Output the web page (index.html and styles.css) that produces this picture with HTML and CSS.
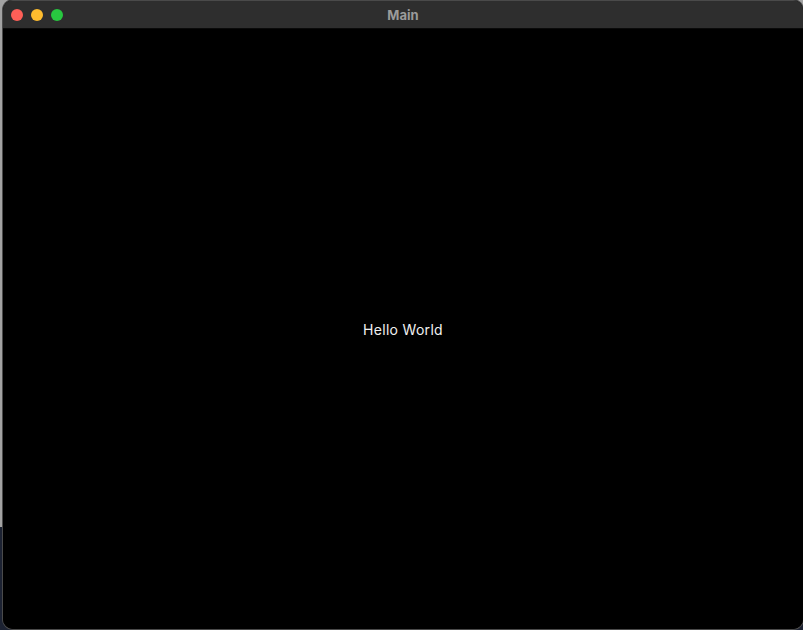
FILE: index.html
```html
<!DOCTYPE html>
<html>
<head>
<meta charset="utf-8">
<link rel="stylesheet" href="styles.css">
</head>
<body>
<div class="desktop">
  <div class="window">
    <div class="titlebar">
      <div class="lights">
        <span class="light red"></span>
        <span class="light yellow"></span>
        <span class="light green"></span>
      </div>
      <div class="title">Main</div>
    </div>
    <div class="content">
      <span class="hello">Hello World</span>
    </div>
  </div>
</div>
</body>
</html>
```
FILE: styles.css
```css
html, body {
  margin: 0;
  padding: 0;
  width: 803px;
  height: 630px;
  overflow: hidden;
}
.desktop {
  width: 803px;
  height: 630px;
  box-sizing: border-box;
  padding-left: 3px;
  display: flex;
  background: linear-gradient(to bottom, #a3a3a3 0, #a3a3a3 527px, #1c2232 527px, #1c2232 100%);
}
.window {
  flex: 1;
  height: 629px;
  display: flex;
  flex-direction: column;
  border-radius: 10px;
  overflow: hidden;
  background: #000;
  box-shadow: 0 0 0 1px #4a4a4a;
}
.titlebar {
  height: 29px;
  background: #2e2e2e;
  border-top: 1px solid #4a4a4a;
  border-bottom: 1px solid #0a0a0a;
  box-sizing: border-box;
  display: flex;
  align-items: center;
  position: relative;
}
.lights {
  display: flex;
  gap: 8px;
  padding-left: 8px;
  padding-top: 1px;
}
.light {
  width: 12px;
  height: 12px;
  border-radius: 50%;
  display: block;
}
.red { background: #fe5f57; }
.yellow { background: #febc2e; }
.green { background: #28c840; }
.title {
  position: absolute;
  left: 0;
  right: 0;
  top: 0;
  bottom: 0;
  display: flex;
  align-items: center;
  justify-content: center;
  font-family: "Inter", "Noto Sans", sans-serif;
  font-weight: 700;
  font-size: 13px;
  color: #9b9b9b;
  padding-top: 1px;
}
.content {
  flex: 1;
  display: flex;
  align-items: center;
  justify-content: center;
  background: #000;
}
.hello {
  font-family: "Inter", "Noto Sans", sans-serif;
  font-size: 14px;
  letter-spacing: 0.3px;
  color: #f0f0f0;
}
```
